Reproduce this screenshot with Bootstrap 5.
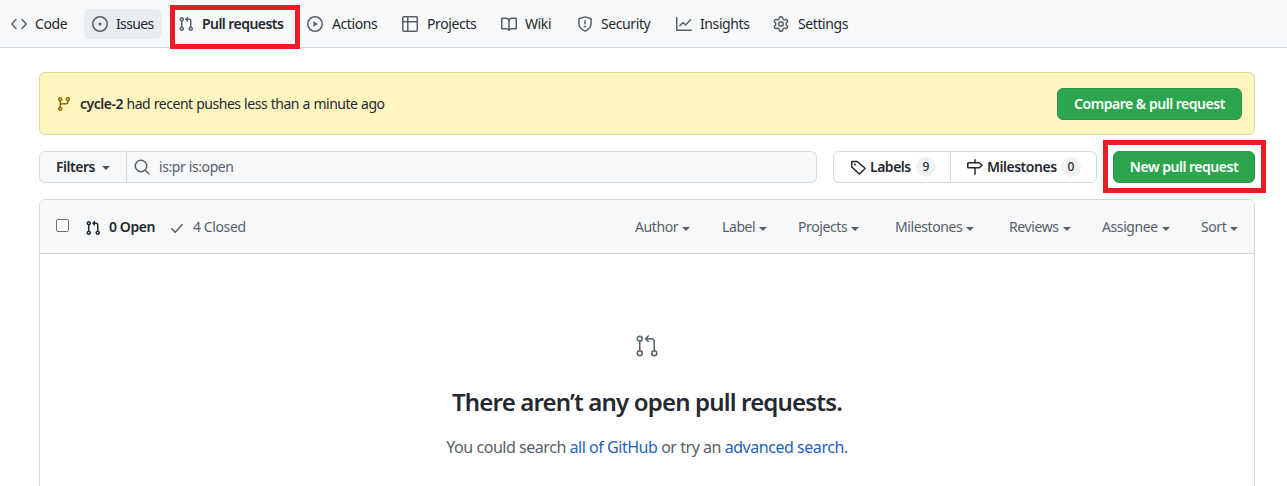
<!DOCTYPE html>
<html lang="en">
<head>
<meta charset="utf-8">
<meta name="viewport" content="width=device-width, initial-scale=1">
<title>Pull requests</title>
<link rel="stylesheet" href="https://cdn.jsdelivr.net/npm/bootstrap@5.3.0/dist/css/bootstrap.min.css">
<style>
  body{font-family:"Noto Sans","Open Sans",sans-serif;font-size:14px;line-height:20px;color:#24292f;letter-spacing:-.4px;height:486px;overflow:hidden;background:#fff}
  svg{flex:none;display:block;fill:currentColor}
  .ln{fill:none;stroke:currentColor;stroke-width:1.5}
  .repo-nav{height:48px;background:#f6f8fa;border-bottom:1px solid #d5dae0;padding:9px 3px 0;gap:8px}
  .repo-nav .nav-link{height:30px;padding:0 0 0 8px;gap:8px;color:#24292f;border-radius:6px;flex:none;position:relative}
  .repo-nav svg{color:#57606a}
  .repo-nav .wide-gap{gap:9px}
  .repo-nav .hovered{background:#eaedf2;letter-spacing:-.65px}
  .repo-nav .sb{letter-spacing:-.55px}
  .sb{font-weight:600}
  .callout{position:absolute;border:5px solid #e81d25;pointer-events:none;z-index:2}
  .page-body{width:1216px;margin:24px 0 0 39px}
  .push-note{height:63px;background:#fff5c0;border:1px solid #e3d695;border-radius:6px;padding:0 12px 0 16px}
  .note-text{letter-spacing:-.48px;word-spacing:.4px}
  .btn{font-size:14px;line-height:20px;height:32px;padding:5px 0;border-radius:6px;font-weight:600;letter-spacing:-.48px}
  .btn-go,.btn-go:hover{background:#2da44e;border:1px solid #2a964a;color:#fff}
  .toolbar{height:32px;margin-top:16px}
  .btn-plain,.btn-plain:hover{border:1px solid #d3d8dd;color:#24292f;background:#fff}
  .arrow{border:4px solid transparent;border-top-color:currentColor;border-bottom:0;width:8px;height:4px;flex:none}
  .toolbar .arrow{color:#4b5056;margin-top:2px}
  .query{background:#f6f8fa;border:1px solid #d3d8dd;border-left:0;border-radius:0 6px 6px 0;color:#57606a;padding-left:7px;gap:9px}
  .counter{background:#eff1f3;border-radius:10px;width:20px;height:20px;font-size:12px;font-weight:500;text-align:center;margin-left:1px}
  .pr-list{border:1px solid #d3d8dd;border-radius:6px 6px 0 0;margin-top:16px;height:300px}
  .pr-head{height:54px;background:#f6f8fa;border-bottom:1px solid #d3d8dd;border-radius:5px 5px 0 0;color:#57606a;padding:1px 16px 0}
  .pr-head .form-check-input{width:13px;height:13px;margin:0 0 4px;border:1px solid #6e6e6e;border-radius:2px;flex:none}
  .pr-head svg{margin-top:2px}
  .filter{gap:4px;flex:none}
  .filter .arrow{margin-top:3px}
  .blank h3{font-size:24px;line-height:36px;font-weight:600;margin:26px 0 0;letter-spacing:-.83px}
  .blank p{font-size:16px;line-height:24px;color:#57606a;margin:15px 0 0;letter-spacing:-.46px}
  .blank a{color:#1f62c0;text-decoration:none}
</style>
</head>
<body>
<svg width="0" height="0" class="position-absolute">
  <symbol id="pr" viewBox="0 0 16 16"><path d="M7.177 3.073L9.573.677A.25.25 0 0110 .854v4.792a.25.25 0 01-.427.177L7.177 3.427a.25.25 0 010-.354zM3.75 2.5a.75.75 0 100 1.5.75.75 0 000-1.5zm-2.25.75a2.25 2.25 0 113 2.122v5.256a2.251 2.251 0 11-1.5 0V5.372A2.25 2.25 0 011.5 3.25zM11 2.5h-1V4h1a1 1 0 011 1v5.628a2.251 2.251 0 101.5 0V5A2.5 2.5 0 0011 2.5zm1 10.25a.75.75 0 111.5 0 .75.75 0 01-1.5 0zM3.75 12a.75.75 0 100 1.5.75.75 0 000-1.5z"/></symbol>
</svg>

<nav class="repo-nav nav flex-nowrap align-items-start">
  <a class="nav-link d-flex align-items-center" style="width:73px"><svg width="16" height="16" viewBox="0 0 16 16"><path class="ln" stroke-linecap="round" stroke-linejoin="round" d="M5 3.5 .9 8 5 12.5M11 3.5 15.1 8 11 12.5"/></svg><span>Code</span></a>
  <a class="nav-link d-flex align-items-center hovered" style="width:78px"><svg width="16" height="16" viewBox="0 0 16 16"><circle class="ln" cx="8" cy="8" r="7.25"/><circle cx="8" cy="8" r="1.5"/></svg><span>Issues</span></a>
  <a class="nav-link d-flex align-items-center" style="width:121px"><svg width="16" height="16"><use href="#pr"/></svg><span class="sb">Pull requests</span></a>
  <a class="nav-link wide-gap d-flex align-items-center" style="width:87px"><svg width="16" height="16" viewBox="0 0 16 16"><circle class="ln" cx="8" cy="8" r="7.25"/><path d="M6.4 5.2v5.6L11 8z"/></svg><span>Actions</span></a>
  <a class="nav-link wide-gap d-flex align-items-center" style="width:91px"><svg width="16" height="16" viewBox="0 0 16 16"><rect class="ln" x=".75" y=".75" width="14.5" height="14.5" rx="1"/><path class="ln" d="M5.75 1v14M1 5.75h14"/></svg><span>Projects</span></a>
  <a class="nav-link d-flex align-items-center" style="width:68px"><svg width="16" height="16" viewBox="0 0 16 16"><path class="ln" stroke-linejoin="round" d="M8 4.2C7.4 2.8 6.4 2.2 5 2.2H.75v10.5h4.5c1.2 0 2.2.5 2.75 1.7.5-1.2 1.5-1.7 2.75-1.7h4.5V2.2H11C9.600 2.200 8.600 2.800 8 4.200zV14.400"/></svg><span>Wiki</span></a>
  <a class="nav-link d-flex align-items-center" style="width:91px"><svg width="16" height="16" viewBox="0 0 16 16"><path class="ln" stroke-linejoin="round" d="M8 .9 14.100 2.800V7.500c0 3.700-2.400 6.200-6.100 7.600C4.300 13.700 1.900 11.200 1.900 7.500V2.800z"/><path class="ln" stroke-linecap="round" d="M8 4.700v3.100"/><circle cx="8" cy="10.500" r="1"/></svg><span>Security</span></a>
  <a class="nav-link d-flex align-items-center" style="width:89px"><svg width="16" height="16" viewBox="0 0 16 16"><path class="ln" stroke-linecap="round" stroke-linejoin="round" d="M.75 1.750v12.500h14.500M3.800 9.700 7 6.500l2.500 2.500 5.200-5.200"/></svg><span>Insights</span></a>
  <a class="nav-link wide-gap d-flex align-items-center" style="width:91px"><svg width="16" height="16" viewBox="0 0 16 16"><path d="M8 0a8.2 8.2 0 0 1 .701.031C9.444.095 9.99.645 10.16 1.29l.288 1.107c.018.066.079.158.212.224.231.114.454.243.668.386.123.082.233.09.299.071l1.103-.303c.644-.176 1.392.021 1.82.63.27.385.506.792.704 1.218.315.675.111 1.422-.364 1.891l-.814.806c-.049.048-.098.147-.088.294.016.257.016.515 0 .772-.01.147.038.246.088.294l.814.806c.475.469.679 1.216.364 1.891a7.977 7.977 0 0 1-.704 1.217c-.428.61-1.176.807-1.82.63l-1.102-.302c-.067-.019-.177-.011-.3.071a5.909 5.909 0 0 1-.668.386c-.133.066-.194.158-.211.224l-.29 1.106c-.168.646-.715 1.196-1.458 1.26a8.006 8.006 0 0 1-1.402 0c-.743-.064-1.289-.614-1.458-1.26l-.289-1.106c-.018-.066-.079-.158-.212-.224a5.738 5.738 0 0 1-.668-.386c-.123-.082-.233-.09-.299-.071l-1.103.303c-.644.176-1.392-.021-1.82-.63a8.12 8.12 0 0 1-.704-1.218c-.315-.675-.111-1.422.363-1.891l.815-.806c.05-.048.098-.147.088-.294a6.214 6.214 0 0 1 0-.772c.01-.147-.038-.246-.088-.294l-.815-.806C.635 6.045.431 5.298.746 4.623a7.92 7.92 0 0 1 .704-1.217c.428-.61 1.176-.807 1.82-.63l1.102.302c.067.019.177.011.3-.071.214-.143.437-.272.668-.386.133-.066.194-.158.211-.224l.29-1.106C6.009.645 6.556.095 7.299.03 7.53.01 7.764 0 8 0Zm-.571 1.525c-.036.003-.108.036-.137.146l-.289 1.105c-.147.561-.549.967-.998 1.189-.173.086-.34.183-.5.29-.417.278-.97.423-1.529.27l-1.103-.303c-.109-.03-.175.016-.195.045-.22.312-.412.644-.573.99-.014.031-.021.11.059.19l.815.806c.411.406.562.957.53 1.456a4.709 4.709 0 0 0 0 .582c.032.499-.119 1.05-.53 1.456l-.815.806c-.081.08-.073.159-.059.19.162.346.353.677.573.989.02.03.085.076.195.046l1.102-.303c.56-.153 1.113-.008 1.53.27.161.107.328.204.501.29.447.222.85.629.997 1.189l.289 1.105c.029.109.101.143.137.146a6.6 6.6 0 0 0 1.142 0c.036-.003.108-.036.137-.146l.289-1.105c.147-.561.549-.967.998-1.189.173-.086.34-.183.5-.29.417-.278.97-.423 1.529-.27l1.103.303c.109.029.175-.016.195-.045.22-.313.411-.644.573-.99.014-.031.021-.11-.059-.19l-.815-.806c-.411-.406-.562-.957-.53-1.456a4.709 4.709 0 0 0 0-.582c-.032-.499.119-1.05.53-1.456l.815-.806c.081-.08.073-.159.059-.19a6.464 6.464 0 0 0-.573-.989c-.02-.03-.085-.076-.195-.046l-1.102.303c-.56.153-1.113.008-1.53-.27a4.44 4.44 0 0 0-.501-.29c-.447-.222-.85-.629-.997-1.189l-.289-1.105c-.029-.11-.101-.143-.137-.146a6.6 6.6 0 0 0-1.142 0ZM11 8a3 3 0 1 1-6 0 3 3 0 0 1 6 0ZM9.500 8a1.500 1.500 0 1 0-3.001.001A1.500 1.500 0 0 0 9.500 8Z"/></svg><span>Settings</span></a>
</nav>
<div class="callout" style="left:170px;top:5px;width:130px;height:44px"></div>

<main class="page-body">
  <div class="push-note d-flex align-items-center">
    <svg width="16" height="16" viewBox="0 0 16 16" style="color:#8f6a00"><path fill-rule="evenodd" d="M11.75 2.5a.75.75 0 100 1.5.75.75 0 000-1.5zm-2.25.75a2.25 2.25 0 113 2.122V6A2.500 2.500 0 0110 8.500H6a1 1 0 00-1 1v1.128a2.251 2.251 0 11-1.500 0V5.372a2.250 2.250 0 111.500 0v1.836A2.492 2.492 0 016 7h4a1 1 0 001-1v-.628A2.250 2.250 0 019.500 3.250zM4.250 12a.750.750 0 100 1.500.750.750 0 000-1.500zM3.500 3.250a.750.750 0 111.500 0 .750.750 0 01-1.500 0z"/></svg>
    <span class="ms-2 note-text"><span class="sb">cycle-2</span> had recent pushes less than a minute ago</span>
    <button class="btn btn-go ms-auto" style="width:185px">Compare &amp; pull request</button>
  </div>

  <div class="toolbar d-flex">
    <button class="btn btn-plain d-flex align-items-center rounded-end-0" style="width:88px;padding-left:16px;gap:7px;background:#f6f8fa">Filters <span class="arrow"></span></button>
    <div class="query d-flex align-items-center" style="width:690px"><svg width="16" height="16" viewBox="0 0 16 16"><circle class="ln" cx="7" cy="7" r="5.750"/><path class="ln" stroke-linecap="round" d="m11.200 11.200 3.600 3.600"/></svg><span>is:pr is:open</span></div>
    <div class="btn-group ms-3">
      <button class="btn btn-plain d-flex align-items-center flex-grow-0" style="width:118px;padding-left:16px;gap:4px"><svg width="16" height="16" viewBox="0 0 16 16"><path class="ln" stroke-linejoin="round" d="M1.750 2.500h5.500L14.800 9a.6.6 0 0 1 0 .8l-5 5a.6.6 0 0 1-.8 0L1.750 8z"/><circle cx="5" cy="5.500" r="1"/></svg>Labels<span class="counter">9</span></button>
      <button class="btn btn-plain d-flex align-items-center flex-grow-0" style="width:147px;padding-left:16px;gap:4px"><svg width="16" height="16" viewBox="0 0 16 16"><path class="ln" stroke-linejoin="round" d="M1.500 3.750h10.700L15 6.250l-2.800 2.500H1.500a.75.75 0 0 1-.75-.75V4.500a.75.75 0 0 1 .75-.75z"/><path class="ln" stroke-linecap="round" d="M8 .75v3M8 9v6.250"/></svg>Milestones<span class="counter" style="margin-left:0">0</span></button>
    </div>
    <button class="btn btn-go ms-auto" style="width:142px">New pull request</button>
  </div>

  <section class="pr-list">
    <div class="pr-head d-flex align-items-center">
      <input class="form-check-input" type="checkbox" aria-label="Select all">
      <div class="d-flex align-items-center sb" style="color:#24292f;margin-left:16px;gap:8px;width:84px"><svg width="16" height="16"><use href="#pr"/></svg><span>0 Open</span></div>
      <div class="d-flex align-items-center" style="gap:8px"><svg width="16" height="16" viewBox="0 0 16 16"><path class="ln" stroke-linecap="round" stroke-linejoin="round" d="m2.750 8.750 3.500 3.500L13.250 4.500"/></svg><span>4 Closed</span></div>
      <div class="d-flex ms-auto">
        <span class="filter d-flex align-items-center" style="width:87px">Author<i class="arrow"></i></span>
        <span class="filter d-flex align-items-center" style="width:76px">Label<i class="arrow"></i></span>
        <span class="filter d-flex align-items-center" style="width:97px">Projects<i class="arrow"></i></span>
        <span class="filter d-flex align-items-center" style="width:114px">Milestones<i class="arrow"></i></span>
        <span class="filter d-flex align-items-center" style="width:93px">Reviews<i class="arrow"></i></span>
        <span class="filter d-flex align-items-center" style="width:99px">Assignee<i class="arrow"></i></span>
        <span class="filter d-flex align-items-center" style="width:37px">Sort<i class="arrow"></i></span>
      </div>
    </div>
    <div class="blank text-center" style="padding-top:80px">
      <svg class="mx-auto" width="24" height="24" viewBox="0 0 24 24" style="color:#57606a"><g class="ln"><circle cx="4.750" cy="4.750" r="2.500"/><circle cx="4.750" cy="19.250" r="2.500"/><circle cx="19.250" cy="19.250" r="2.500"/><path stroke-linecap="round" stroke-linejoin="round" d="M4.750 7.250v9.500M19.250 16.750V7.500a2.750 2.750 0 0 0-2.750-2.750h-6M13.300 2 10.500 4.750l2.800 2.750"/></g></svg>
      <h3>There aren’t any open pull requests.</h3>
      <p>You could search <a href="#">all of GitHub</a> or try an <a href="#">advanced search</a>.</p>
    </div>
  </section>
</main>
<div class="callout" style="left:1103px;top:140px;width:163px;height:53px"></div>
<script src="https://cdn.jsdelivr.net/npm/bootstrap@5.3.0/dist/js/bootstrap.bundle.min.js"></script>
</body>
</html>
